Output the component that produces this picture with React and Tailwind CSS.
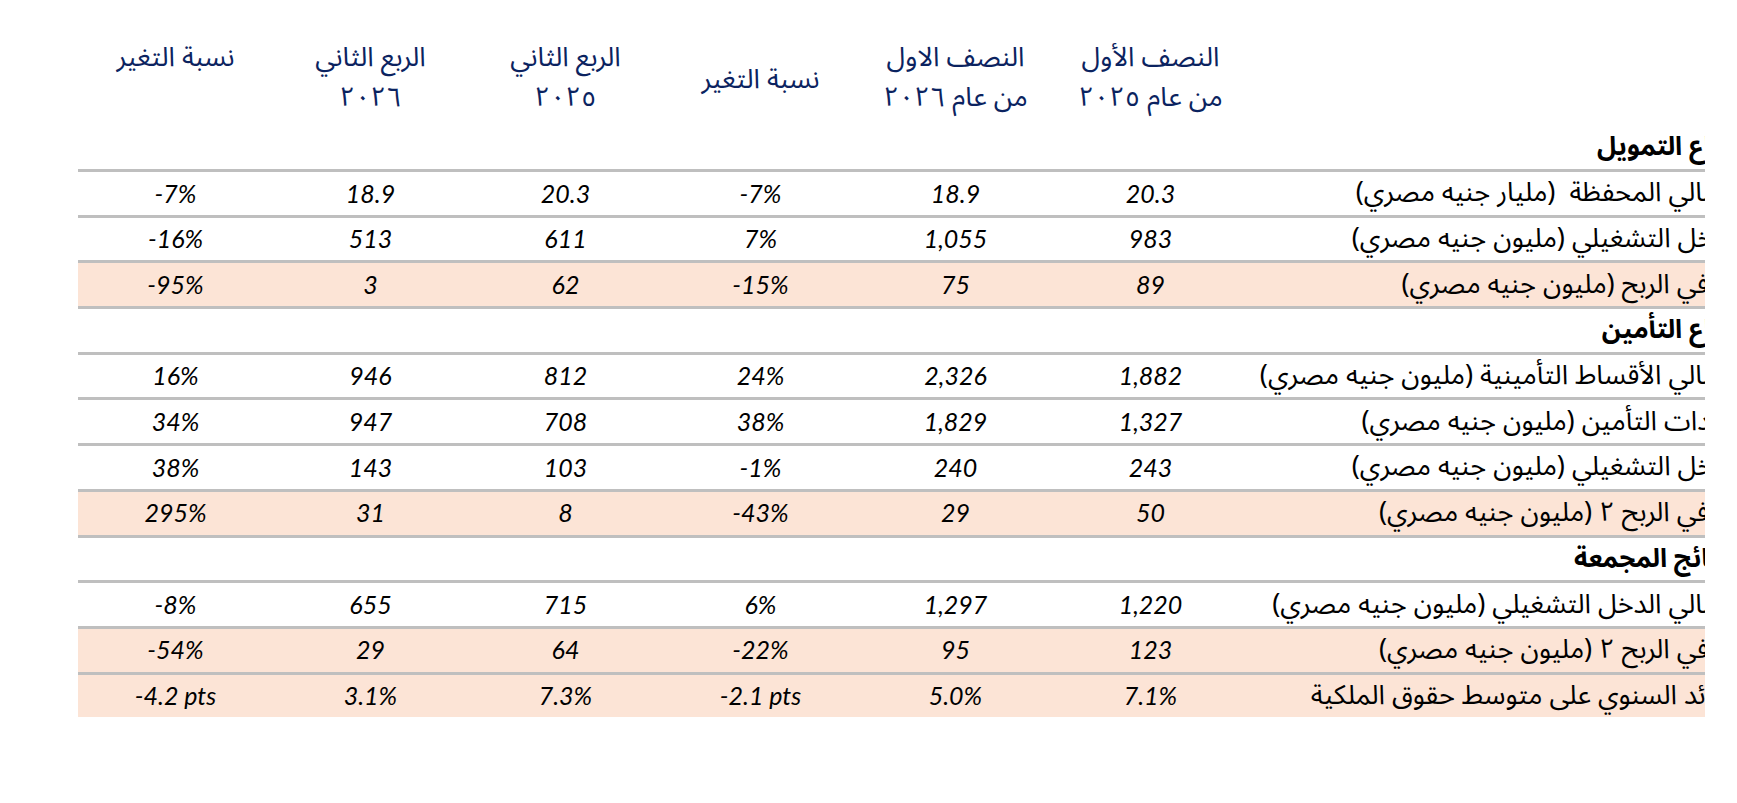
import React from "react";

const rows = [
  { type: "section", label: "قطاع التمويل", first: true },
  { label: "إجمالي المحفظة  (مليار جنيه مصري)", v: ["-7%", "18.9", "20.3", "-7%", "18.9", "20.3"] },
  { label: "الدخل التشغيلي (مليون جنيه مصري)", v: ["-16%", "513", "611", "7%", "1,055", "983"] },
  { label: "صافي الربح (مليون جنيه مصري)", v: ["-95%", "3", "62", "-15%", "75", "89"], hl: true },
  { type: "section", label: "قطاع التأمين" },
  { label: "إجمالي الأقساط التأمينية (مليون جنيه مصري)", v: ["16%", "946", "812", "24%", "2,326", "1,882"] },
  { label: "إيرادات التأمين (مليون جنيه مصري)", v: ["34%", "947", "708", "38%", "1,829", "1,327"] },
  { label: "الدخل التشغيلي (مليون جنيه مصري)", v: ["38%", "143", "103", "-1%", "240", "243"] },
  { label: "صافي الربح ٢ (مليون جنيه مصري)", v: ["295%", "31", "8", "-43%", "29", "50"], hl: true },
  { type: "section", label: "النتائج المجمعة" },
  { label: "إجمالي الدخل التشغيلي (مليون جنيه مصري)", v: ["-8%", "655", "715", "6%", "1,297", "1,220"] },
  { label: "صافي الربح ٢ (مليون جنيه مصري)", v: ["-54%", "29", "64", "-22%", "95", "123"], hl: true },
  { label: "العائد السنوي على متوسط حقوق الملكية", v: ["-4.2 pts", "3.1%", "7.3%", "-2.1 pts", "5.0%", "7.1%"], hl: true },
];

function Row({ r }) {
  const base = r.first
    ? "h-[45px]"
    : "h-[45.7px] border-t-[3px] border-[#bfbfbf]";
  const bg = r.hl ? "bg-[#fce4d6]" : "bg-white";
  if (r.type === "section") {
    return (
      <div className={`${base} ${bg} grid grid-cols-[repeat(6,195px)_1fr]`}>
        <div className="col-span-6" />
        <div className="overflow-hidden flex items-center justify-end">
          <span
            dir="rtl"
            className="whitespace-pre font-bold text-[26px] leading-[40px] text-black mr-[-40px] font-['Noto_Sans_Arabic','DejaVu_Sans',sans-serif]"
          >
            {r.label}
          </span>
        </div>
      </div>
    );
  }
  return (
    <div className={`${base} ${bg} grid grid-cols-[repeat(6,195px)_1fr]`}>
      {r.v.map((x, i) => (
        <div
          key={i}
          className="flex items-center justify-center italic text-[25px] text-black font-['Lato','Open_Sans',sans-serif]"
        >
          {x}
        </div>
      ))}
      <div className="overflow-hidden flex items-center justify-end">
        <span
          dir="rtl"
          className="whitespace-pre text-[27px] leading-[40px] text-black mr-[-36px] font-['Noto_Sans_Arabic','DejaVu_Sans',sans-serif]"
        >
          {r.label}
        </span>
      </div>
    </div>
  );
}

const headFont =
  "text-[#0b2360] text-[27px] leading-[40px] font-['Noto_Sans_Arabic','DejaVu_Sans',sans-serif]";

function Head({ l1, pre, num }) {
  return (
    <div dir="rtl" className={`flex flex-col items-center pt-[38px] ${headFont}`}>
      <div className="whitespace-nowrap">{l1}</div>
      <div className="whitespace-nowrap">
        {pre && <span>{pre} </span>}
        <span className="tracking-[4px]">{num}</span>
      </div>
    </div>
  );
}

export default function App() {
  return (
    <div className="w-[1737px] h-[803px] bg-white overflow-hidden">
      <div className="ml-[78px] w-[1627px] overflow-hidden">
        <div className="h-[124px] grid grid-cols-[repeat(6,195px)_1fr]">
          <div dir="rtl" className={`flex flex-col items-center pt-[38px] ${headFont}`}>
            <div className="whitespace-nowrap">نسبة التغير</div>
          </div>
          <Head l1="الربع الثاني" num="٢٠٢٦" />
          <Head l1="الربع الثاني" num="٢٠٢٥" />
          <div dir="rtl" className={`flex flex-col items-center pt-[60px] ${headFont}`}>
            <div className="whitespace-nowrap">نسبة التغير</div>
          </div>
          <Head l1="النصف الاول" pre="من عام" num="٢٠٢٦" />
          <Head l1="النصف الأول" pre="من عام" num="٢٠٢٥" />
          <div />
        </div>
        {rows.map((r, i) => (
          <Row key={i} r={r} />
        ))}
      </div>
    </div>
  );
}
